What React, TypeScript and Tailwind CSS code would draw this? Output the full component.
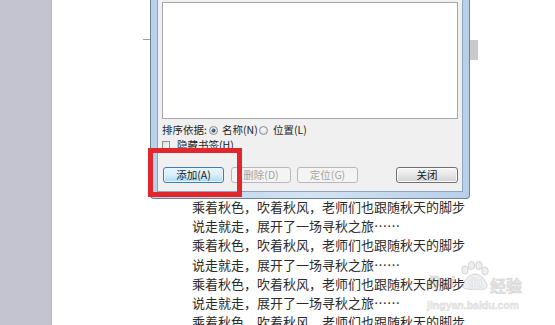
import React from "react";

const FONT = '"Noto Sans CJK SC", "Noto Sans", sans-serif';

function Radio({ checked }: { checked?: boolean }) {
  return (
    <svg width="9" height="9" viewBox="0 0 9 9" className="shrink-0">
      <defs>
        <radialGradient id={checked ? "rg1" : "rg2"} cx="50%" cy="40%" r="60%">
          <stop offset="0%" stopColor="#ffffff" />
          <stop offset="100%" stopColor="#d6d6d6" />
        </radialGradient>
      </defs>
      <circle cx="4.5" cy="4.5" r="4" fill={`url(#${checked ? "rg1" : "rg2"})`} stroke="#8f9193" strokeWidth="1" />
      {checked && <circle cx="4.5" cy="4.5" r="2" fill="#2e4f72" />}
      {checked && <circle cx="4" cy="4" r="0.8" fill="#8fb2d8" />}
    </svg>
  );
}

function Btn({
  w,
  children,
  variant,
}: {
  w: string;
  children: React.ReactNode;
  variant: "default" | "normal" | "disabled";
}) {
  const cls =
    variant === "default"
      ? "border-[#3c7fb1] bg-gradient-to-b from-[#eaf6fd] via-[#d9f0fc] to-[#a7d9f5] text-[#1a1a1a] shadow-[inset_0_0_0_1px_#e8f5fd]"
      : variant === "normal"
      ? "border-[#707070] bg-gradient-to-b from-[#f6f6f6] via-[#e6e6e6] to-[#d2d2d2] text-[#1a1a1a] shadow-[inset_0_0_0_1px_#fbfbfb]"
      : "border-[#b5b9bc] bg-[#f4f4f4] text-[#a3a3a3]";
  return (
    <div
      className={`h-[16px] ${w} shrink-0 rounded-[3px] border flex items-center justify-center text-[10.5px] leading-none ${cls}`}
    >
      {children}
    </div>
  );
}

function Dialog() {
  return (
    <div className="absolute left-[150px] top-0 w-[320px] h-[199px] border-x border-b border-[#6e8298] bg-gradient-to-r from-[#b9d1ea] via-[#d3e3f3] to-[#b7cfe8] px-[6px] pb-[6px] rounded-b-[4px]">
      <div className="w-full h-full bg-[#f0f0f0] border-x border-b border-[#8fa5bd] flex flex-col px-[4px]" style={{ fontFamily: FONT }}>
        <div className="mt-[2px] h-[117px] bg-white border border-[#a4a8ae] shrink-0" />
        <div className="mt-[4px] h-[14px] flex items-center text-[10.5px] text-[#1f1f1f] leading-none">
          <span className="w-[47px] whitespace-nowrap">排序依据:</span>
          <Radio checked />
          <span className="ml-[4px] w-[37px] whitespace-nowrap">名称(N)</span>
          <Radio />
          <span className="ml-[5px] whitespace-nowrap">位置(L)</span>
        </div>
        <div className="mt-[1px] h-[14px] flex items-center text-[10.5px] text-[#1f1f1f] leading-none">
          <div className="w-[8px] h-[8px] border border-[#8f9193] bg-gradient-to-br from-[#dcdcdc] to-[#fafafa]" />
          <span className="ml-[7px]">隐藏书签(H)</span>
        </div>
        <div className="mt-[15px] flex items-center">
          <div className="ml-[1px]" />
          <Btn w="w-[61px]" variant="default">添加(A)</Btn>
          <div className="ml-[7px]" />
          <Btn w="w-[60px]" variant="disabled">删除(D)</Btn>
          <div className="ml-[6px]" />
          <Btn w="w-[61px]" variant="disabled">定位(G)</Btn>
          <div className="ml-auto" />
          <Btn w="w-[62px]" variant="normal">关闭</Btn>
        </div>
      </div>
    </div>
  );
}

function Watermark() {
  return (
    <div className="absolute left-[373px] top-[260px] w-[110px] h-[55px] pointer-events-none" style={{ fontFamily: '"Liberation Sans", Arial, sans-serif' }}>
      <span className="absolute left-[3px] top-[14px] text-[17px] font-bold italic text-[#e3e3e3] leading-none" style={{ WebkitTextStroke: "0.6px #d4d4d4" }}>
        Bai
      </span>
      <svg className="absolute left-[34px] top-[1px]" width="32" height="30" viewBox="0 0 32 30">
        <g fill="#efefef" stroke="#d2d2d2" strokeWidth="1">
          <ellipse cx="6" cy="9" rx="3.2" ry="4" />
          <ellipse cx="12.5" cy="4.5" rx="3.2" ry="4" />
          <ellipse cx="20" cy="4.5" rx="3.2" ry="4" />
          <ellipse cx="26" cy="10" rx="3.2" ry="4" />
          <path d="M16 13 C10 13 5 20 4 24 C3 28 8 29 16 28 C24 29 29 28 28 24 C27 20 22 13 16 13 Z" />
        </g>
        <text x="16" y="26" textAnchor="middle" fontSize="12" fontWeight="bold" fill="#fafafa" stroke="#d8d8d8" strokeWidth="0.5" fontFamily="Liberation Sans, Arial, sans-serif">
          du
        </text>
      </svg>
      <span className="absolute left-[65px] top-[17px] text-[16px] font-bold text-[#e6e6e6] leading-none" style={{ fontFamily: FONT, WebkitTextStroke: "0.6px #d4d4d4" }}>
        经验
      </span>
      <span className="absolute left-[2px] top-[40px] text-[10.5px] font-bold text-[#e8e8e8] leading-none" style={{ WebkitTextStroke: "0.4px #dadada" }}>
        jingyan.baidu.com
      </span>
    </div>
  );
}

export default function App() {
  const l1 = "乘着秋色，吹着秋风，老师们也跟随秋天的脚步";
  const l2 = "说走就走，展开了一场寻秋之旅……";
  const lines = [l1, l2, l1, l2, l1, l2, l1];
  return (
    <div className="relative w-[555px] h-[325px] overflow-hidden flex bg-white" style={{ fontFamily: FONT }}>
      <div className="w-[52px] h-full shrink-0 bg-[#c3c4cf] border-r border-[#b2b3bf]" />
      <div className="relative flex-1 bg-white pl-[140px] pt-[197px]">
        <Watermark />
        <div className="relative flex flex-col text-[13px] text-[#2b2b2b]">
          {lines.map((t, i) => (
            <div key={i} className="h-[19.2px] leading-[19.2px] whitespace-nowrap">
              {t}
            </div>
          ))}
        </div>
      </div>
      <div className="absolute left-[143px] top-[39px] w-[7px] h-px bg-[#a0a0a0]" />
      <div className="absolute left-[470px] top-[40px] w-[8px] h-[20px] bg-[#c9c9c9]" />
      <Dialog />
      <div className="absolute left-[148px] top-[148px] w-[94px] h-[49px] border-[5px] border-[#e3262b]" />
    </div>
  );
}
